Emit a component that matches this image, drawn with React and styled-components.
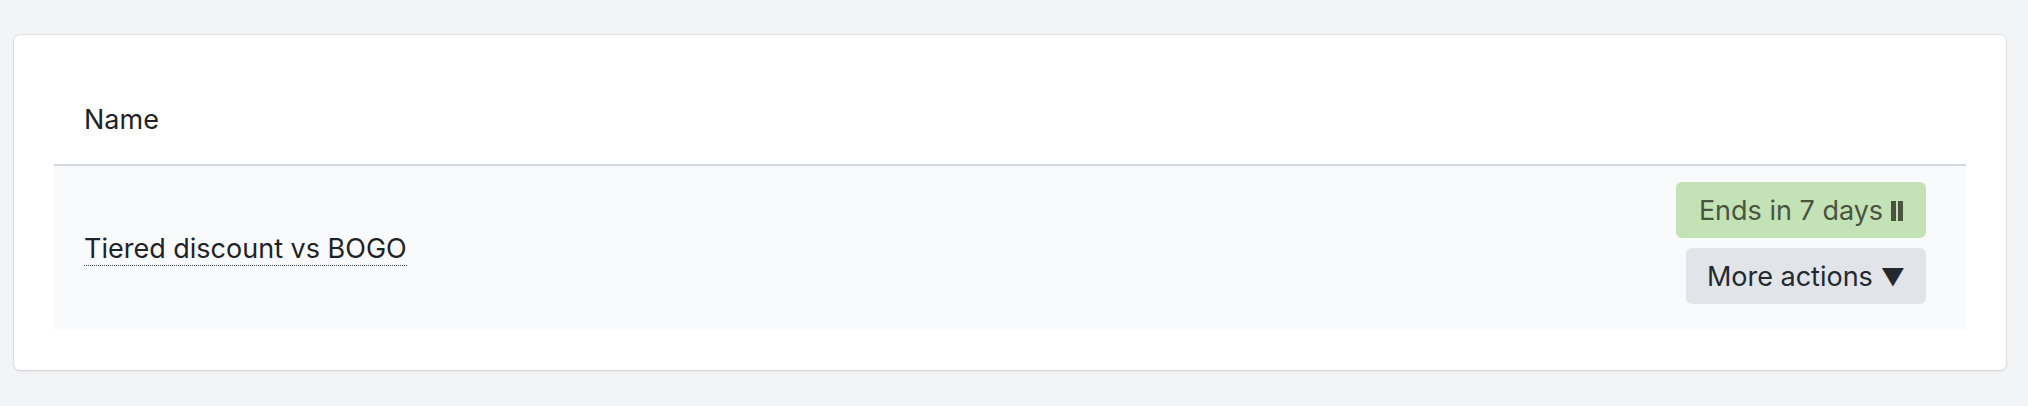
import React from "react";
import styled, { createGlobalStyle } from "styled-components";

const Global = createGlobalStyle`
  html, body { margin: 0; padding: 0; background: #f3f4f6; }
  body { font-family: Inter, "Noto Sans", "Liberation Sans", sans-serif; color: #1f2328; }
`;

const Page = styled.div`
  padding: 35px 22px 36px 14px;
`;

const Card = styled.div`
  background: #ffffff;
  border-radius: 6px;
  box-shadow: 0 0 0 1px rgba(0, 0, 0, 0.06), 0 1px 3px rgba(0, 0, 0, 0.1);
  padding: 40px;
  height: 335px;
  box-sizing: border-box;
`;

const Table = styled.div`
  display: flex;
  flex-direction: column;
`;

const HeaderRow = styled.div`
  height: 89px;
  display: flex;
  align-items: center;
  padding: 0 30px;
  border-bottom: 2px solid #d3dae1;
`;

const HeaderCell = styled.div`
  font-size: 27px;
  color: #1f2328;
`;

const Row = styled.div`
  height: 164px;
  box-sizing: border-box;
  background: #f9fafb;
  display: flex;
  align-items: center;
  justify-content: space-between;
  padding: 0 40px 0 30px;
`;

const NameLink = styled.span`
  font-size: 27px;
  line-height: 33px;
  color: #1f2328;
  border-bottom: 1px dotted #444;
  display: inline-block;
  margin-top: 2px;
`;

const Actions = styled.div`
  display: flex;
  flex-direction: column;
  align-items: flex-end;
  gap: 10px;
  margin-top: -10px;
`;

const Badge = styled.div`
  height: 56px;
  width: ${(p) => p.$w}px;
  box-sizing: border-box;
  border: none;
  border-radius: 6px;
  background: ${(p) => p.$bg};
  color: ${(p) => p.$fg};
  font-family: inherit;
  font-size: 27px;
  display: flex;
  align-items: center;
  justify-content: center;
  gap: 8px;
  padding: 0;
`;

const PauseIcon = styled.span`
  display: inline-flex;
  gap: 2px;
  height: 20px;
  margin-top: 2px;
  & > i {
    width: 5px;
    height: 100%;
    background: currentColor;
  }
`;

const Triangle = styled.span`
  font-size: 24px;
  margin-top: 2px;
`;

export default function App() {
  return (
    <>
      <Global />
      <Page>
        <Card>
          <Table>
            <HeaderRow>
              <HeaderCell>Name</HeaderCell>
            </HeaderRow>
            <Row>
              <NameLink>Tiered discount vs BOGO</NameLink>
              <Actions>
                <Badge $w={250} $bg="#c3e3b6" $fg="#4a5441">
                  Ends in 7 days
                  <PauseIcon>
                    <i />
                    <i />
                  </PauseIcon>
                </Badge>
                <Badge as="button" $w={240} $bg="#e1e4e8" $fg="#24292f">
                  More actions <Triangle>▼</Triangle>
                </Badge>
              </Actions>
            </Row>
          </Table>
        </Card>
      </Page>
    </>
  );
}
